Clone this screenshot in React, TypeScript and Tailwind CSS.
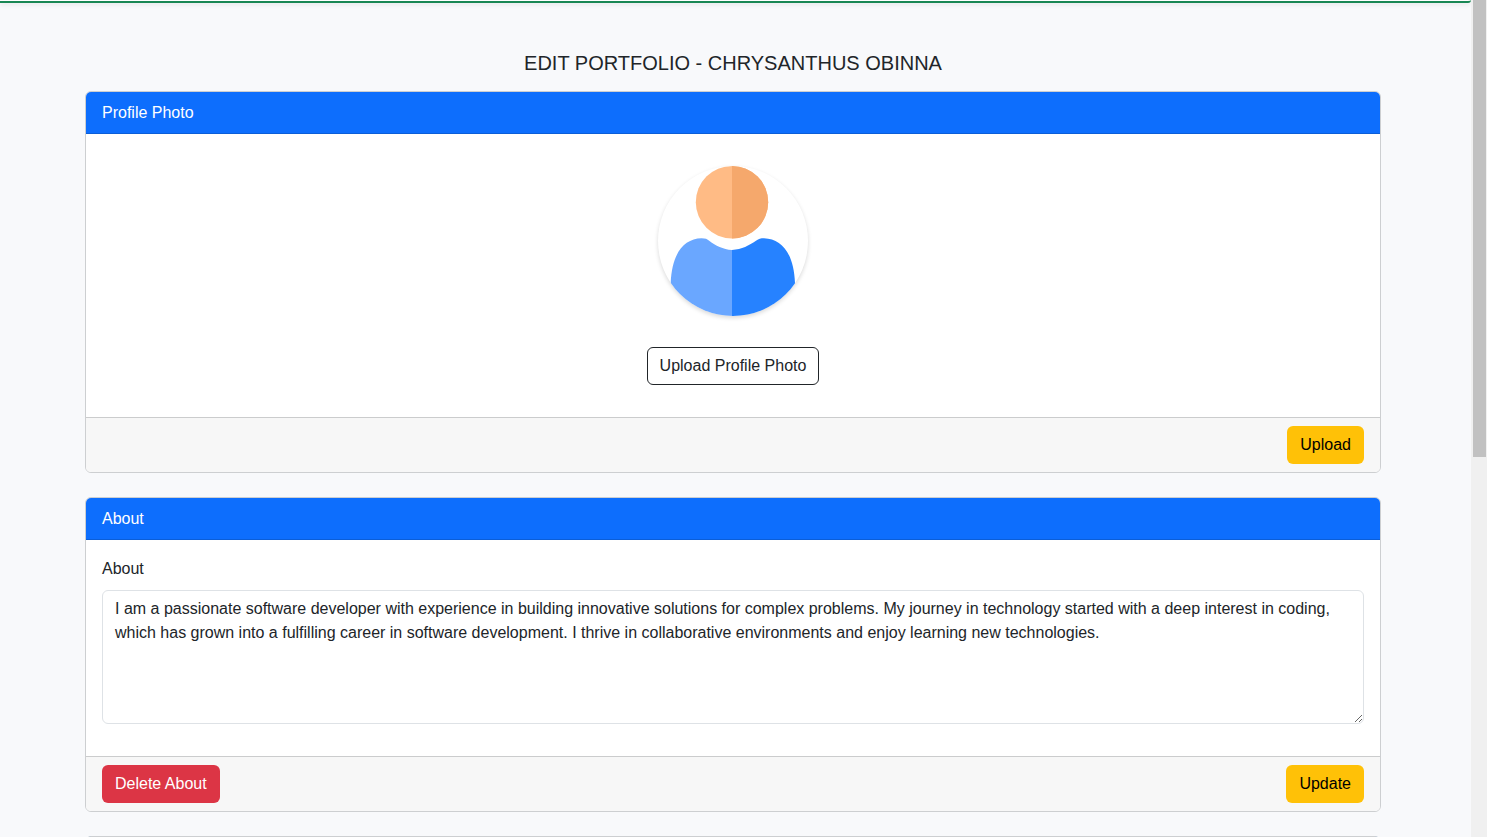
import { useState, type ReactNode } from "react";

function Avatar() {
  return (
    <svg
      viewBox="0 0 150 150"
      role="img"
      aria-label="Profile"
      className="size-[150px] rounded-full bg-white shadow-[0_2px_4px_rgba(0,0,0,0.15)]"
    >
      <circle cx="74" cy="36.200" r="36.200" fill="#ffbb85" />
      <path d="M74 0a36.200 36.200 0 0 1 0 72.400z" fill="#f5a86c" />
      <path
        d="M74 84C65 83.500 57.500 79.500 51.500 75C49 73 47.500 72.300 43.500 72.300C26 72.800 14 87 12.700 117V150H74z"
        fill="#6aa7ff"
      />
      <path
        d="M74 84C84 83.500 91 79.500 98 74.800C101 72.800 102.500 72.300 106 72.300C124 72.800 136 88 137 117V150H74z"
        fill="#2682ff"
      />
    </svg>
  );
}

function Card({ title, children, footer }: { title: string; children: ReactNode; footer: ReactNode }) {
  return (
    <section className="overflow-hidden rounded-md border border-[#cdcfd1] bg-white">
      <h2 className="border-b border-[#0b5ed7] bg-[#0d6efd] px-4 pt-[9px] pb-2 text-white">{title}</h2>
      {children}
      <div className="flex border-t border-[#cbcccd] bg-[#f7f7f7] px-4 py-2">{footer}</div>
    </section>
  );
}

export default function App() {
  const [about, setAbout] = useState(
    "I am a passionate software developer with experience in building innovative solutions for complex problems. My journey in technology started with a deep interest in coding, which has grown into a fulfilling career in software development. I thrive in collaborative environments and enjoy learning new technologies."
  );

  return (
    <div className="flex h-screen bg-[#f8f9fb] font-['Liberation_Sans',Arial,sans-serif] text-base text-[#212529]">
      <div className="min-w-0 flex-1 overflow-y-auto [scrollbar-width:none]">
        <header className="h-[3px] rounded-br-md border-b-2 border-[#198754] bg-white shadow-[0_2px_4px_rgba(0,0,0,0.08)]" />
        <main className="pr-[5px]">
          <div className="mx-auto flex max-w-[1320px] flex-col px-3 pt-12">
            <h1 className="mb-4 text-center text-xl leading-6">EDIT PORTFOLIO - CHRYSANTHUS OBINNA</h1>
            <div className="flex flex-col gap-6">
              <Card
                title="Profile Photo"
                footer={
                  <button type="button" className="ml-auto h-[38px] rounded-md bg-[#ffc107] px-[13px] pb-px text-black">
                    Upload
                  </button>
                }
              >
                <div className="flex flex-col items-center gap-[31px] py-8">
                  <Avatar />
                  <button
                    type="button"
                    className="h-[38px] rounded-md border border-[#212529] px-3 pb-px"
                  >
                    Upload Profile Photo
                  </button>
                </div>
              </Card>
              <Card
                title="About"
                footer={
                  <>
                    <button type="button" className="h-[38px] rounded-md bg-[#dc3545] px-[13px] pb-px text-white">
                      Delete About
                    </button>
                    <button type="button" className="ml-auto h-[38px] rounded-md bg-[#ffc107] px-[13px] pb-px text-black">
                      Update
                    </button>
                  </>
                }
              >
                <div className="flex flex-col px-4 pt-[17px] pb-8">
                  <label htmlFor="about" className="mb-[9px]">
                    About
                  </label>
                  <textarea
                    id="about"
                    rows={5}
                    value={about}
                    onChange={(e) => setAbout(e.target.value)}
                    className="block w-full resize-y rounded-md border border-[#dee2e6] bg-white px-3 py-[6px] leading-6"
                  />
                </div>
              </Card>
              <div className="h-12 rounded-md border border-[#cdcfd1] bg-[#0d6efd]" />
            </div>
          </div>
        </main>
      </div>
      <div aria-hidden="true" className="w-4 shrink-0 bg-[#f0f0f0] pr-px pl-[2px]">
        <div className="h-[457px] bg-[#c1c1c1]" />
      </div>
    </div>
  );
}
